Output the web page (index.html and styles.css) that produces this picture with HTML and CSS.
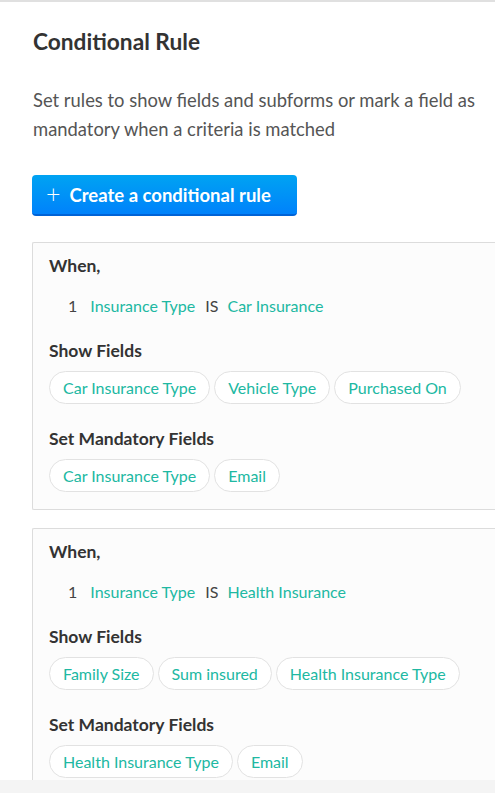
FILE: index.html
```html
<!DOCTYPE html>
<html>
<head>
<meta charset="utf-8">
<link rel="stylesheet" href="styles.css">
</head>
<body>
<div class="viewport">
  <div class="panel">
    <h1 class="title">Conditional Rule</h1>
    <p class="desc">Set rules to show fields and subforms or mark a field as mandatory when a criteria is matched</p>
    <button class="btn"><span class="plus">+</span>Create a conditional rule</button>

    <div class="card">
      <div class="label">When,</div>
      <div class="cond"><span class="num">1</span><span class="teal">Insurance Type</span><span class="op">IS</span><span class="teal">Car Insurance</span></div>
      <div class="label">Show Fields</div>
      <div class="chips">
        <span class="chip">Car Insurance Type</span>
        <span class="chip">Vehicle Type</span>
        <span class="chip">Purchased On</span>
      </div>
      <div class="label">Set Mandatory Fields</div>
      <div class="chips">
        <span class="chip">Car Insurance Type</span>
        <span class="chip">Email</span>
      </div>
    </div>

    <div class="card">
      <div class="label">When,</div>
      <div class="cond"><span class="num">1</span><span class="teal">Insurance Type</span><span class="op">IS</span><span class="teal">Health Insurance</span></div>
      <div class="label">Show Fields</div>
      <div class="chips">
        <span class="chip">Family Size</span>
        <span class="chip">Sum insured</span>
        <span class="chip">Health Insurance Type</span>
      </div>
      <div class="label">Set Mandatory Fields</div>
      <div class="chips">
        <span class="chip">Health Insurance Type</span>
        <span class="chip">Email</span>
      </div>
    </div>
  </div>
</div>
<div class="footer"></div>
</body>
</html>
```
FILE: styles.css
```css
html, body {
  margin: 0;
  padding: 0;
  background: #fff;
  font-family: Lato, "Open Sans", sans-serif;
}
.viewport {
  height: 780px;
  overflow: hidden;
  border-top: 2px solid #e0e0e0;
  box-sizing: border-box;
}
.panel {
  padding: 26px 0 0 32px;
}
.title {
  margin: 0 0 0 1px;
  font-size: 22.7px;
  font-weight: 700;
  color: #333;
  line-height: 28px;
}
.desc {
  margin: 30px 0 0 1px;
  font-size: 18.4px;
  line-height: 29px;
  color: #555;
  padding-right: 12px;
}
.btn {
  margin-top: 31px;
  display: flex;
  align-items: center;
  height: 41px;
  width: 265px;
  padding: 0 0 0 14px;
  border: none;
  border-radius: 4px;
  border-bottom: 2px solid #0063d6;
  background: linear-gradient(#00a3f2, #0082fb);
  color: #fff;
  font-family: Lato, sans-serif;
  font-size: 18.5px;
  font-weight: 700;
  box-sizing: border-box;
}
.plus {
  font-weight: 300;
  font-size: 25px;
  margin-right: 9px;
  line-height: 1;
  position: relative;
  top: -1px;
}
.card {
  margin-top: 26px;
  border: 1px solid #dcdcdc;
  border-right: none;
  border-radius: 2px 0 0 2px;
  background: #fcfcfc;
  padding: 11px 0 17px 16px;
}
.card + .card {
  margin-top: 18px;
  padding-top: 11px;
}
.label {
  font-size: 17.5px;
  font-weight: 700;
  color: #333;
  line-height: 24px;
}
.cond {
  display: flex;
  margin: 18px 0 23px 19px;
  font-size: 16px;
  line-height: 20px;
  color: #444;
}
.num { margin-right: 13px; }
.op { margin: 0 9px 0 10px; }
.teal { color: #20b8a2; }
.chips {
  display: flex;
  gap: 4px;
  margin-top: 8px;
  margin-bottom: 23px;
}
.chips:last-child { margin-bottom: 0; }
.chip {
  border: 1px solid #e2e2e2;
  border-radius: 17px;
  background: #fff;
  color: #20b8a2;
  font-size: 16px;
  line-height: 31px;
  padding: 0 13px;
}
.footer {
  height: 13px;
  background: #f4f4f4;
}
```
